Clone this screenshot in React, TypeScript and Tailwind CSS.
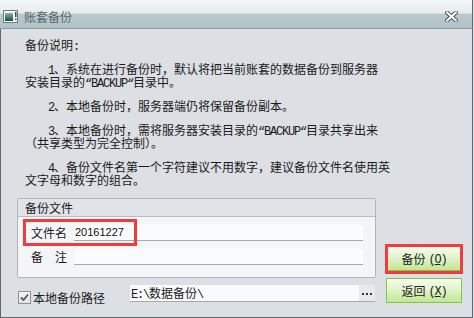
import React from "react";

const Lat = ({ children }: { children: React.ReactNode }) => (
  <span className="font-['Liberation_Mono',monospace] tracking-[-1.2px] leading-none">{children}</span>
);

const Line = ({ indent, children }: { indent?: boolean; children: React.ReactNode }) => (
  <div className={indent ? "h-[13px] leading-[13px] pl-[23px]" : "h-[13px] leading-[13px]"}>{children}</div>
);

const WinIcon = () => (
  <svg width="15" height="13" viewBox="0 0 15 13">
    <rect x="0.5" y="0.5" width="14" height="12" fill="#f4f6f6" stroke="#6f7b80" />
    <defs>
      <linearGradient id="gi" x1="0" y1="0" x2="0" y2="1">
        <stop offset="0" stopColor="#7fb7a8" />
        <stop offset="1" stopColor="#1f4a40" />
      </linearGradient>
    </defs>
    <rect x="2" y="3" width="8" height="8" fill="url(#gi)" />
    <rect x="12" y="2" width="1.5" height="5" fill="#3b4a50" />
    <rect x="12" y="8.5" width="1.5" height="1.5" fill="#3b4a50" />
  </svg>
);

const CloseX = () => (
  <svg width="13" height="11" viewBox="0 0 13 11">
    <path d="M2 1.5 L11 9.5 M11 1.5 L2 9.5" stroke="#4a555a" strokeWidth="4" strokeLinecap="square" />
    <path d="M2 1.5 L11 9.5 M11 1.5 L2 9.5" stroke="#ffffff" strokeWidth="2" strokeLinecap="square" />
  </svg>
);

const Field = ({ label, value }: { label: string; value?: string }) => (
  <div className="flex items-end h-[16px]">
    <span className="w-[43px] h-[16px] leading-[16px] pb-[1px]">{label}</span>
    <div className="w-[289px] h-[16px] bg-[#fafbfc] border-b border-[#a4aaaf] flex items-center pl-[1px]">
      {value && <span className="font-['Liberation_Sans',sans-serif] text-[11px] leading-none text-[#111]">{value}</span>}
    </div>
  </div>
);

const GreenButton = ({ label, k }: { label: string; k: string }) => (
  <button className="w-[76px] h-[25px] border border-[#7fc846] bg-[linear-gradient(to_bottom,#f6fbef_0%,#e2f4cc_45%,#c2e694_100%)] text-[12px] leading-[14px] text-[#222] flex items-center justify-center">
    <span>{label}</span>
    <span className="ml-[3px]">
      <Lat>
        (<span className="underline">{k}</span>)
      </Lat>
    </span>
  </button>
);

const App = () => {
  return (
    <main className="w-[474px] h-[318px] bg-[#dcdfe3] flex flex-col font-['Noto_Sans_CJK_SC',sans-serif] text-[12px] text-[#1a1a1a] overflow-hidden">
      <div className="w-[473px] h-[29px] shrink-0 flex items-center border-r border-b border-r-[#5d6b71] border-b-[#8e9ca2] bg-[linear-gradient(to_bottom,#f4f6f7_0%,#e6ebed_47%,#b9c9ce_50%,#b2c3c8_100%)]">
        <div className="ml-[3px] mt-[5px] h-[13px]">
          <WinIcon />
        </div>
        <span className="ml-[6px] mt-[5px] text-[12px] leading-[14px] text-[#5a676e]">账套备份</span>
        <div className="ml-auto mr-[14px] mt-[5px] h-[11px]">
          <CloseX />
        </div>
      </div>

      <div className="w-[473px] h-[289px] flex flex-col border-l border-r border-b border-[#5d6b71] pl-[16px] pt-[9px]">
        <div className="ml-[8px] whitespace-nowrap">
          <Line>
            备份说明<Lat>:</Lat>
          </Line>
          <div className="mt-[11px]">
            <Line indent>
              <Lat>1</Lat>、系统在进行备份时，默认将把当前账套的数据备份到服务器
            </Line>
            <Line>
              安装目录的<Lat>“BACKUP“</Lat>目录中。
            </Line>
          </div>
          <div className="mt-[11px]">
            <Line indent>
              <Lat>2</Lat>、本地备份时，服务器端仍将保留备份副本。
            </Line>
          </div>
          <div className="mt-[11px]">
            <Line indent>
              <Lat>3</Lat>、本地备份时，需将服务器安装目录的<Lat>“BACKUP“</Lat>目录共享出来
            </Line>
            <Line>（共享类型为完全控制）。</Line>
          </div>
          <div className="mt-[11px]">
            <Line indent>
              <Lat>4</Lat>、备份文件名第一个字符建议不用数字，建议备份文件名使用英
            </Line>
            <Line>文字母和数字的组合。</Line>
          </div>
        </div>

        <div className="flex items-end mt-[12px]">
          <div className="w-[359px] flex flex-col">
            <div className="h-[80px] border border-[#aeb4b9] rounded-[2px] flex flex-col">
              <div className="h-[18px] bg-[#e0e3e7] border-b border-[#b8bdc2] pl-[7px] leading-[17px]">
                备份文件
              </div>
              <div className="relative flex-1 bg-[#f4f5f7] pl-[13px] pt-[8px] flex flex-col gap-[8px]">
                <Field label="文件名" value="20161227" />
                <Field label="备　注" />
                <div className="absolute left-[5px] top-[2px] w-[114px] h-[27px] border-[3px] border-[#f23c3c]" />
              </div>
            </div>

            <div className="flex items-center mt-[7px] h-[17px]">
              <div className="w-[113px] flex items-center">
                <div className="ml-[1px] mt-[8px] w-[13px] h-[13px] border border-[#8c9398] bg-[linear-gradient(to_bottom,#f2f3f4,#e0e2e4)] flex items-center justify-center">
                  <svg width="9" height="9" viewBox="0 0 9 9">
                    <path d="M1 4.5 L3.5 7 L8 1.5" fill="none" stroke="#55595c" strokeWidth="1.8" />
                  </svg>
                </div>
                <span className="ml-[2px] mt-[8px] h-[13px] leading-[13px]">本地备份路径</span>
              </div>
              <div className="w-[229px] h-[17px] bg-[#f9fafb] border-b border-[#a4aaaf] pl-[1px] leading-[15px]">
                <Lat>E:\</Lat>数据备份<Lat>\</Lat>
              </div>
              <div className="w-[16px] h-[17px] bg-[#e7e9eb] border-b border-[#a4aaaf] flex items-center justify-center gap-[2px] pt-[2px]">
                <span className="w-[2px] h-[2px] bg-[#333]" />
                <span className="w-[2px] h-[2px] bg-[#333]" />
                <span className="w-[2px] h-[2px] bg-[#333]" />
              </div>
            </div>
          </div>

          <div className="ml-[10px] flex flex-col gap-[7px] mb-[-1px]">
            <div className="relative">
              <GreenButton label="备份" k="O" />
              <div className="absolute -top-[2px] -bottom-[3px] -left-[1px] -right-[1px] border-[3px] border-[#f23c3c]" />
            </div>
            <GreenButton label="返回" k="X" />
          </div>
        </div>
      </div>
    </main>
  );
};

export default App;
